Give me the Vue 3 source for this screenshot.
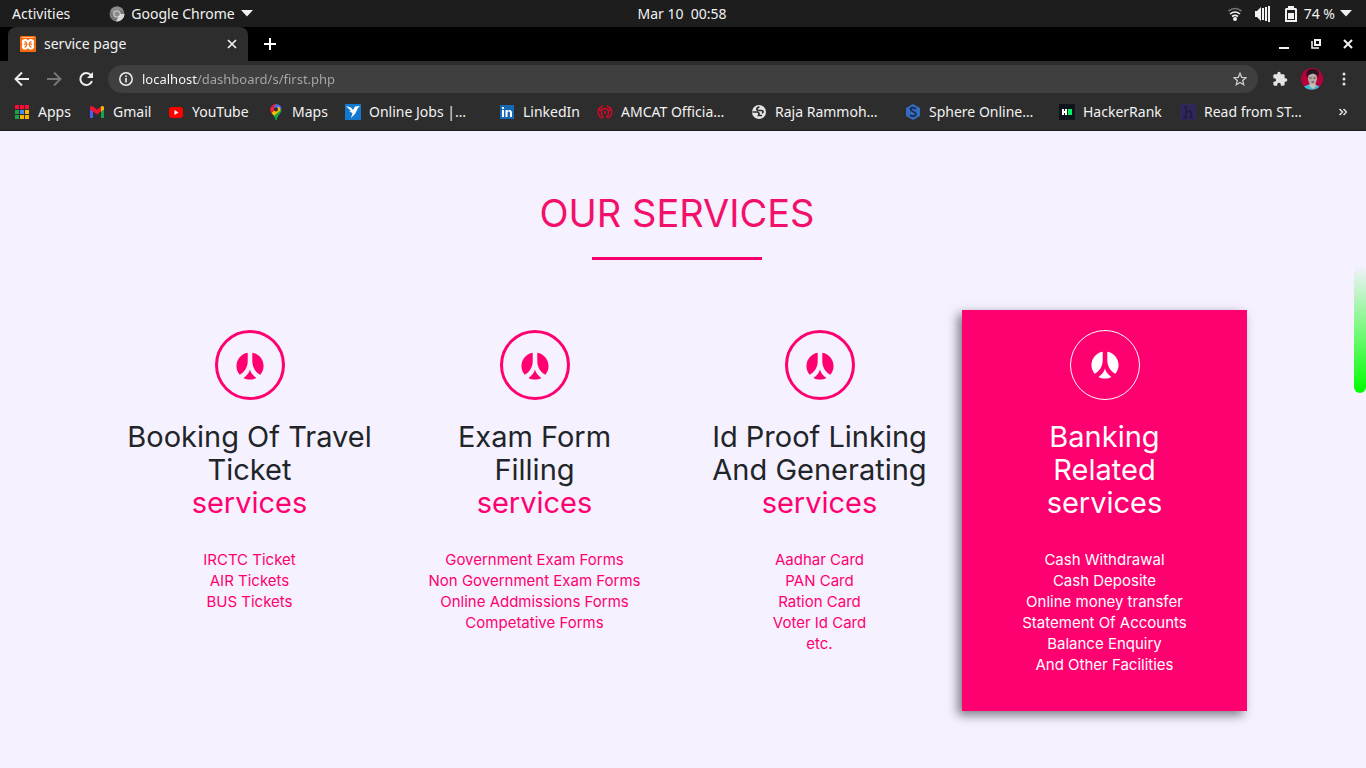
<script setup>
const bookmarks = [
  { icon: 'apps', label: 'Apps' },
  { icon: 'gmail', label: 'Gmail' },
  { icon: 'youtube', label: 'YouTube' },
  { icon: 'maps', label: 'Maps' },
  { icon: 'bird', label: 'Online Jobs |…' },
  { icon: 'linkedin', label: 'LinkedIn' },
  { icon: 'amcat', label: 'AMCAT Officia…' },
  { icon: 'globe', label: 'Raja Rammoh…' },
  { icon: 'sphere', label: 'Sphere Online…' },
  { icon: 'hackerrank', label: 'HackerRank' },
  { icon: 'reader', label: 'Read from ST…' },
]

const appColors = ['#ff0a35', '#ff0a35', '#ff0a35', '#15a34a', '#4c8bf5', '#fbb500', '#15a34a', '#fbb500', '#fbb500']

const services = [
  { title: ['Booking Of Travel', 'Ticket'], items: ['IRCTC Ticket', 'AIR Tickets', 'BUS Tickets'] },
  {
    title: ['Exam Form', 'Filling'],
    items: ['Government Exam Forms', 'Non Government Exam Forms', 'Online Addmissions Forms', 'Competative Forms'],
  },
  {
    title: ['Id Proof Linking', 'And Generating'],
    items: ['Aadhar Card', 'PAN Card', 'Ration Card', 'Voter Id Card', 'etc.'],
  },
  {
    title: ['Banking', 'Related'],
    active: true,
    items: ['Cash Withdrawal', 'Cash Deposite', 'Online money transfer', 'Statement Of Accounts', 'Balance Enquiry', 'And Other Facilities'],
  },
]
</script>

<template>
  <div class="desktop">
    <header class="system">
      <div class="system-left">
        <button>Activities</button>
        <button class="app-menu">
          <svg width="16" height="16" viewBox="0 0 16 16" aria-hidden="true">
            <circle cx="8" cy="8" r="7.5" fill="#777" />
            <path d="M8 8h7.5A7.5 7.5 0 0 1 7 15.4l3-5.600z" fill="#d8d8d8" />
            <path d="M1.500 4.300A7.500 7.500 0 0 1 14.500 4.300H8L5 9z" fill="#8c8c8c" />
            <circle cx="8" cy="8" r="3.600" fill="#e4e4e4" />
            <circle cx="8" cy="8" r="2.700" fill="#8b8b8b" />
          </svg>
          Google Chrome
          <svg class="caret" width="12" height="7" viewBox="0 0 12 7" aria-hidden="true"><path d="M0 0h12L6 6.500z" fill="#f2f2f2" /></svg>
        </button>
      </div>
      <button class="clock">Mar 10&nbsp; 00:58</button>
      <div class="system-right">
        <svg width="16" height="16" viewBox="0 0 16 16" fill="none" stroke="#f2f2f2" stroke-width="1.600" aria-hidden="true">
          <path d="M1.500 5Q8 0 14.500 5" stroke="#777" />
          <path d="M3 8Q8 4 13 8" />
          <path d="M5 10.500Q8 8.300 11 10.500" />
          <circle cx="8" cy="13" r="2" fill="#f2f2f2" stroke="none" />
        </svg>
        <svg class="volume" width="16" height="16" viewBox="0 0 16 16" aria-hidden="true">
          <path d="M0 5h2l4-4v14l-4-4H0zM7 2h2v12H7zM10 1h2v14h-2zM13 0h2v16h-2z" fill="#f2f2f2" />
        </svg>
        <svg class="battery" width="12" height="16" viewBox="0 0 12 16" aria-hidden="true">
          <path d="M3 0h6v2h2l1 1v13H0V3l1-1h2zM2 4v10h8V4z" fill="#f2f2f2" fill-rule="evenodd" />
          <path d="M3 7h6v6H3z" fill="#f2f2f2" />
        </svg>
        <span>74 %</span>
        <svg class="caret" width="12" height="7" viewBox="0 0 12 7" aria-hidden="true"><path d="M0 0h12L6 6.500z" fill="#f2f2f2" /></svg>
      </div>
    </header>

    <div class="tabs">
      <div class="tab">
        <svg width="16" height="16" viewBox="0 0 16 16" aria-hidden="true">
          <rect width="16" height="16" rx="1" fill="#f66a10" />
          <path d="M2 1.500h12" stroke="#ffb980" />
          <path d="M5 3c1.400 0 2.300.500 3 1.500C8.700 3.500 9.600 3 11 3c3 0 4 3 2.500 5.200C15 10.500 14 13.500 11 13.500c-1.400 0-2.300-.500-3-1.500-.700 1-1.600 1.500-3 1.500-3 0-4-3-2.500-5.300C1 6 2 3 5 3z" fill="#fff" />
          <path d="M4.500 5.800h1.200L7 8.200l-1.300 2.600H4.500M11.500 5.800h-1.200L9 8.200l1.300 2.600h1.200M4 8.200h2M10 8.200h2" fill="none" stroke="#f66a10" stroke-width="1.200" />
        </svg>
        <span class="tab-title">service page</span>
        <button aria-label="Close tab">
          <svg width="10" height="10" viewBox="0 0 10 10" stroke="#f2f2f2" stroke-width="1.700"><path d="M1 1l8 8M9 1L1 9" /></svg>
        </button>
      </div>
      <button class="new-tab" aria-label="New tab">
        <svg width="12" height="12" viewBox="0 0 12 12" stroke="#fff" stroke-width="2"><path d="M6 0v12M0 6h12" /></svg>
      </button>
      <div class="window-buttons">
        <button aria-label="Minimize"><svg width="10" height="10" viewBox="0 0 10 10"><path d="M0 8h10v2H0z" fill="#f2f2f2" /></svg></button>
        <button aria-label="Restore">
          <svg width="10" height="10" viewBox="0 0 10 10" fill="none" stroke="#f2f2f2" stroke-width="2"><path d="M4 1h5v5H4z" /><path d="M1 2v7h7" stroke-width="1.500" /></svg>
        </button>
        <button aria-label="Close"><svg width="10" height="10" viewBox="0 0 10 10" stroke="#f2f2f2" stroke-width="2"><path d="M1 1l8 8M9 1L1 9" /></svg></button>
      </div>
    </div>

    <div class="toolbar">
      <button aria-label="Back">
        <svg width="16" height="16" viewBox="0 0 16 16" fill="none" stroke="#eee" stroke-width="1.900"><path d="M15 8H2M8 1.500L1.500 8 8 14.500" /></svg>
      </button>
      <button aria-label="Forward">
        <svg width="16" height="16" viewBox="0 0 16 16" fill="none" stroke="#777" stroke-width="1.900"><path d="M1 8h13M8 1.500L14.500 8 8 14.500" /></svg>
      </button>
      <button aria-label="Reload">
        <svg width="16" height="16" viewBox="0 0 16 16"><path d="M13 4.200A6 6 0 1 0 14 10" fill="none" stroke="#eee" stroke-width="2" /><path d="M15 1v6H9z" fill="#eee" /></svg>
      </button>
      <div class="omnibox">
        <svg width="14" height="14" viewBox="0 0 14 14" aria-hidden="true"><circle cx="7" cy="7" r="6.200" fill="none" stroke="#eee" stroke-width="1.500" /><path d="M6.200 6h1.600v4.500H6.200zM6.200 3.400h1.600V5H6.200z" fill="#eee" /></svg>
        <input type="text" aria-label="Address" value="localhost/dashboard/s/first.php" />
        <button aria-label="Bookmark this page">
          <svg width="14" height="14" viewBox="0 0 14 14" fill="none" stroke="#ccc" stroke-width="1.300"><path d="M7 1.300l1.700 4 4.300.400-3.300 2.800 1 4.200L7 10.500l-3.700 2.200 1-4.200L1 5.700l4.300-.400z" /></svg>
        </button>
      </div>
      <button class="extensions" aria-label="Extensions">
        <svg width="16" height="16" viewBox="0 0 24 24"><path fill="#e4e4e4" d="M20.500 11H19V7c0-1.100-.900-2-2-2h-4V3.500a2.500 2.500 0 0 0-5 0V5H4c-1.100 0-2 .900-2 2v3.800h1.500a2.700 2.700 0 0 1 0 5.400H2V20c0 1.100.900 2 2 2h3.800v-1.500a2.700 2.700 0 0 1 5.400 0V22H17c1.100 0 2-.900 2-2v-4h1.500a2.500 2.500 0 0 0 0-5z" /></svg>
      </button>
      <button class="avatar" aria-label="Profile">
        <svg width="22" height="22" viewBox="0 0 22 22">
          <circle cx="11" cy="11" r="11" fill="#b8003c" />
          <path d="M3 18.500l6-2.500h4.500l5 2.500A11 11 0 0 1 3 18.500z" fill="#35bfd0" />
          <path d="M8.500 14h6v4.500L12 21l-3.500-3z" fill="#cdbfb7" />
          <ellipse cx="11.500" cy="10.500" rx="4.500" ry="6" fill="#b5aaa4" />
          <path d="M6 10C4.500 4 6.500 1 11.500 1s7.500 3 5.800 9l-1.300-3-4-1.500L7.500 7z" fill="#27131d" />
          <path d="M8.500 10h2m2 0h2m-4 4h2.500" stroke="#4b3437" />
        </svg>
      </button>
      <button class="menu" aria-label="Menu">
        <svg width="4" height="14" viewBox="0 0 4 14" fill="#e4e4e4"><circle cx="2" cy="2" r="1.500" /><circle cx="2" cy="7" r="1.500" /><circle cx="2" cy="12" r="1.500" /></svg>
      </button>
    </div>

    <nav class="bookmarks" aria-label="Bookmarks">
      <a v-for="b in bookmarks" :key="b.label" href="#">
        <svg width="16" height="16" viewBox="0 0 16 16" aria-hidden="true">
          <g v-if="b.icon === 'apps'">
            <rect v-for="(c, i) in appColors" :key="i" :x="1 + (i % 3) * 5" :y="1 + Math.floor(i / 3) * 5" width="4" height="4" :fill="c" />
          </g>
          <g v-else-if="b.icon === 'gmail'">
            <path d="M1 4v10h3V7z" fill="#4c5ef5" />
            <path d="M12 7v7h3V4z" fill="#16a34a" />
            <path d="M1 3.500C1 2 3 1.500 4 2.500l4 3.200 4-3.200v5L8 10.500 4 7.500 1 5.500z" fill="#f0142f" />
            <path d="M12 2.500c1-1 3-.500 3 1v2l-3 2z" fill="#fbbc04" />
          </g>
          <g v-else-if="b.icon === 'youtube'">
            <rect x="1" y="3" width="14" height="11" rx="3" fill="#f00" />
            <path d="M6.500 6v5l4-2.500z" fill="#fff" />
          </g>
          <g v-else-if="b.icon === 'maps'">
            <path d="M8 0a5.500 5.500 0 0 0-4.200 2L8 6z" fill="#f0243a" />
            <path d="M8 0a5.500 5.500 0 0 1 5.500 5.500L8 5.500 6 3z" fill="#4c6ef5" />
            <path d="M3.800 2A5.500 5.500 0 0 0 3.500 9L8 5.500z" fill="#f0243a" />
            <path d="M3.500 9L11 2.500 13 7l-6 6z" fill="#fbbc04" />
            <path d="M13.500 5.500C13.500 10 9 11 8.800 16H7.500C7.500 14 6.500 12.800 5.800 12z" fill="#19a54a" />
            <circle cx="8" cy="5.500" r="2" fill="#2d2d2d" />
          </g>
          <g v-else-if="b.icon === 'bird'">
            <rect width="16" height="16" fill="#1379ce" />
            <path d="M1 2l5 1.500L8 6l2-3.500 5-.500-2 2-3 6-4 4 1.500-5L4 7.500l2-.500z" fill="#fff" />
          </g>
          <g v-else-if="b.icon === 'linkedin'">
            <rect x="1" y="1" width="14" height="14" fill="#1768b5" />
            <path d="M3 6h2v7H3zM3 3h2v2H3zM6.500 6h2v1c1.500-2 4.500-1.200 4.500 1.500V13h-2V9c0-2-2.500-2-2.500 0v4h-2z" fill="#fff" />
          </g>
          <g v-else-if="b.icon === 'amcat'" fill="none" stroke="#d00a28" stroke-width="1.500">
            <path d="M5 14.500C-1 10 1 4 4.500 3L6 1.500M11 14.500c6-4.500 4-10.500.5-11.500L10 1.500M1 5l3 1m11-1l-3 1" />
            <path d="M6.500 14C3 9 4 4.500 8 4.500S13 9 9.500 14M8 7v3" />
          </g>
          <g v-else-if="b.icon === 'globe'">
            <circle cx="8" cy="8" r="7" fill="#e4e4e4" />
            <path d="M8.500 3C5 3.500 5 6.500 8 6.500h2.500c2 0 2 2 .500 2.500M1.500 8H6c2 0 2.500 1.500 1.500 3.500H11" fill="none" stroke="#2d2d2d" stroke-width="1.700" />
          </g>
          <g v-else-if="b.icon === 'sphere'">
            <path d="M8 0l7 4v8l-7 4-7-4V4z" fill="#356cc2" />
            <path d="M11 5C9 3 5.500 3.500 5.500 5.500S11 8 11 10s-3.500 3-6 1" fill="none" stroke="#1b2b4b" stroke-width="1.800" />
          </g>
          <g v-else-if="b.icon === 'hackerrank'">
            <rect width="16" height="16" fill="#0e141e" />
            <path d="M3 5h2v2h1V5h2v6H6V9H5v2H3z" fill="#fff" />
            <path d="M9 5h4v6H9z" fill="#05f05f" />
          </g>
          <g v-else>
            <rect width="16" height="16" rx="2" fill="#2e2757" />
            <path d="M4 3h2v10M6.500 8.500Q11 5.500 11 9v4M3 13.500h4M9.500 13.500H13" fill="none" stroke="#201b41" stroke-width="1.800" />
          </g>
        </svg>
        <span>{{ b.label }}</span>
      </a>
      <button class="more" aria-label="More bookmarks">
        <svg width="8" height="8" viewBox="0 0 8 8" fill="none" stroke="#e4e4e4" stroke-width="1.500"><path d="M.500 1l3 3-3 3M4.500 1l3 3-3 3" /></svg>
      </button>
    </nav>

    <div class="viewport">
      <main>
        <h1>OUR SERVICES</h1>
        <div class="services">
          <section v-for="s in services" :key="s.title[0]" class="card" :class="{ active: s.active }">
            <div class="badge">
              <svg width="28" height="28" viewBox="0 0 512 512" aria-hidden="true">
                <path fill="currentColor" d="M214 169.100c0 110.400-61 205.400-147.600 247.400C30 373.200 8 317.700 8 256.600 8 133.900 97.100 32.200 214 12.500v156.600zM255 504c-42.900 0-83.300-11-118.500-30.400C193.700 437.500 239.900 382.900 255 319c15.500 63.900 61.700 118.500 118.800 154.700C338.700 493 298.300 504 255 504zm190.600-87.500C359 374.500 298 279.600 298 169.100V12.500c116.900 19.700 206 121.400 206 244.100 0 61.100-22 116.600-58.400 159.900z" />
              </svg>
            </div>
            <h2>
              <template v-for="line in s.title" :key="line">{{ line }}<br /></template>
              <span>services</span>
            </h2>
            <ul>
              <li v-for="item in s.items" :key="item">{{ item }}</li>
            </ul>
          </section>
        </div>
      </main>
      <div class="scrollbar"><div class="thumb"></div></div>
    </div>
  </div>
</template>

<style>
body {
  background: #f5f1ff;
}
</style>

<style scoped>
* {
  box-sizing: border-box;
}
.desktop {
  display: flex;
  flex-direction: column;
  min-height: 100vh;
  font-family: "Noto Sans", "Open Sans", sans-serif;
  font-size: 14px;
  color: #f2f2f2;
}
button {
  display: flex;
  align-items: center;
  padding: 0;
  border: 0;
  background: none;
  color: inherit;
  font: inherit;
}
svg {
  display: block;
  flex: none;
}
.system {
  display: grid;
  grid-template-columns: 1fr auto 1fr;
  align-items: center;
  height: 27px;
  padding: 0 14px 0 12px;
  background: #1d1d1d;
}
.system-left,
.system-right {
  display: flex;
  align-items: center;
}
.system-left {
  gap: 39px;
}
.system-right {
  justify-content: flex-end;
}
.volume {
  margin-left: 12px;
}
.battery {
  margin: 0 7px 0 14px;
}
.app-menu {
  gap: 6px;
}
.system-right .caret {
  margin-left: 5px;
}
.tabs {
  display: flex;
  align-items: flex-end;
  height: 34px;
  padding: 0 13px 0 8px;
  background: #000;
}
.tab {
  display: flex;
  align-items: center;
  gap: 8px;
  width: 240px;
  height: 34px;
  padding: 0 11px 0 12px;
  border-radius: 8px 8px 0 0;
  background: #2d2d2d;
}
.tab-title {
  flex: 1;
  padding-bottom: 2px;
}
.new-tab {
  height: 34px;
  margin-left: 16px;
}
.window-buttons {
  display: flex;
  gap: 22px;
  height: 34px;
  margin-left: auto;
}
.toolbar {
  display: flex;
  align-items: center;
  gap: 16px;
  height: 36px;
  padding: 0 20px 0 14px;
  background: #2d2d2d;
}
.omnibox {
  display: flex;
  align-items: center;
  flex: 1;
  gap: 9px;
  height: 28px;
  margin-left: -2px;
  padding: 0 11px;
  border-radius: 14px;
  background: #3f3f3f;
}
.omnibox input {
  flex: 1;
  min-width: 0;
  padding: 0;
  border: 0;
  outline: 0;
  background: linear-gradient(to right, #fff 56px, #a8a8a8 56px);
  background-clip: text;
  color: transparent;
  font: inherit;
  font-size: 13px;
}
.extensions {
  margin-left: -2px;
}
.avatar {
  margin: 0 3px 0 -3px;
}
.bookmarks {
  display: grid;
  grid-template-columns: 75px 79px 100px 77px 154px 98px 154px 154px 154px 121px 154px 1fr;
  align-items: center;
  height: 34px;
  padding: 0 19px 4px 14px;
  border-bottom: 1px solid #1c1c1c;
  background: #2d2d2d;
}
.bookmarks a {
  display: flex;
  align-items: center;
  gap: 8px;
  color: inherit;
  text-decoration: none;
  white-space: nowrap;
}
.more {
  justify-self: end;
}
.viewport {
  display: flex;
  flex: 1;
  background: #f5f1ff;
}
main {
  flex: 1;
  padding: 58px 20px;
  font-family: Inter, "Open Sans", sans-serif;
  text-align: center;
}
h1 {
  margin: 0;
  color: #f3106b;
  font-size: 38px;
  font-weight: 400;
  line-height: 48px;
}
h1::after {
  content: "";
  display: block;
  width: 170px;
  height: 3px;
  margin: 20px auto 50px;
  background: #f6006d;
}
.services {
  display: grid;
  grid-template-columns: repeat(4, 1fr);
  max-width: 1140px;
  margin: 0 auto;
}
.card {
  padding: 20px 15px;
  color: #ff0070;
}
.badge {
  display: flex;
  align-items: center;
  justify-content: center;
  width: 70px;
  height: 70px;
  margin: 0 auto 20px;
  padding-top: 2px;
  border: 3px solid #ff0070;
  border-radius: 50%;
}
h2 {
  margin: 0 0 30px;
  color: #212529;
  font-size: 29px;
  font-weight: 400;
  line-height: 33px;
}
h2 span {
  color: #ff0070;
}
ul {
  margin: 0 0 16px;
  padding: 0;
  list-style: none;
  font-size: 15px;
  line-height: 21px;
}
.active {
  background: #ff0070;
  color: #fff;
  box-shadow: -4px 4px 10px rgba(0, 0, 0, 0.5);
}
.active h2,
.active h2 span {
  color: #fff;
}
.active .badge {
  padding-top: 0;
  border: 1px solid #fff;
}
.scrollbar {
  flex: none;
  width: 12px;
}
.thumb {
  height: 128px;
  margin-top: 134px;
  border-radius: 6px;
  background: linear-gradient(rgba(0, 255, 0, 0), #0f0);
}
</style>
